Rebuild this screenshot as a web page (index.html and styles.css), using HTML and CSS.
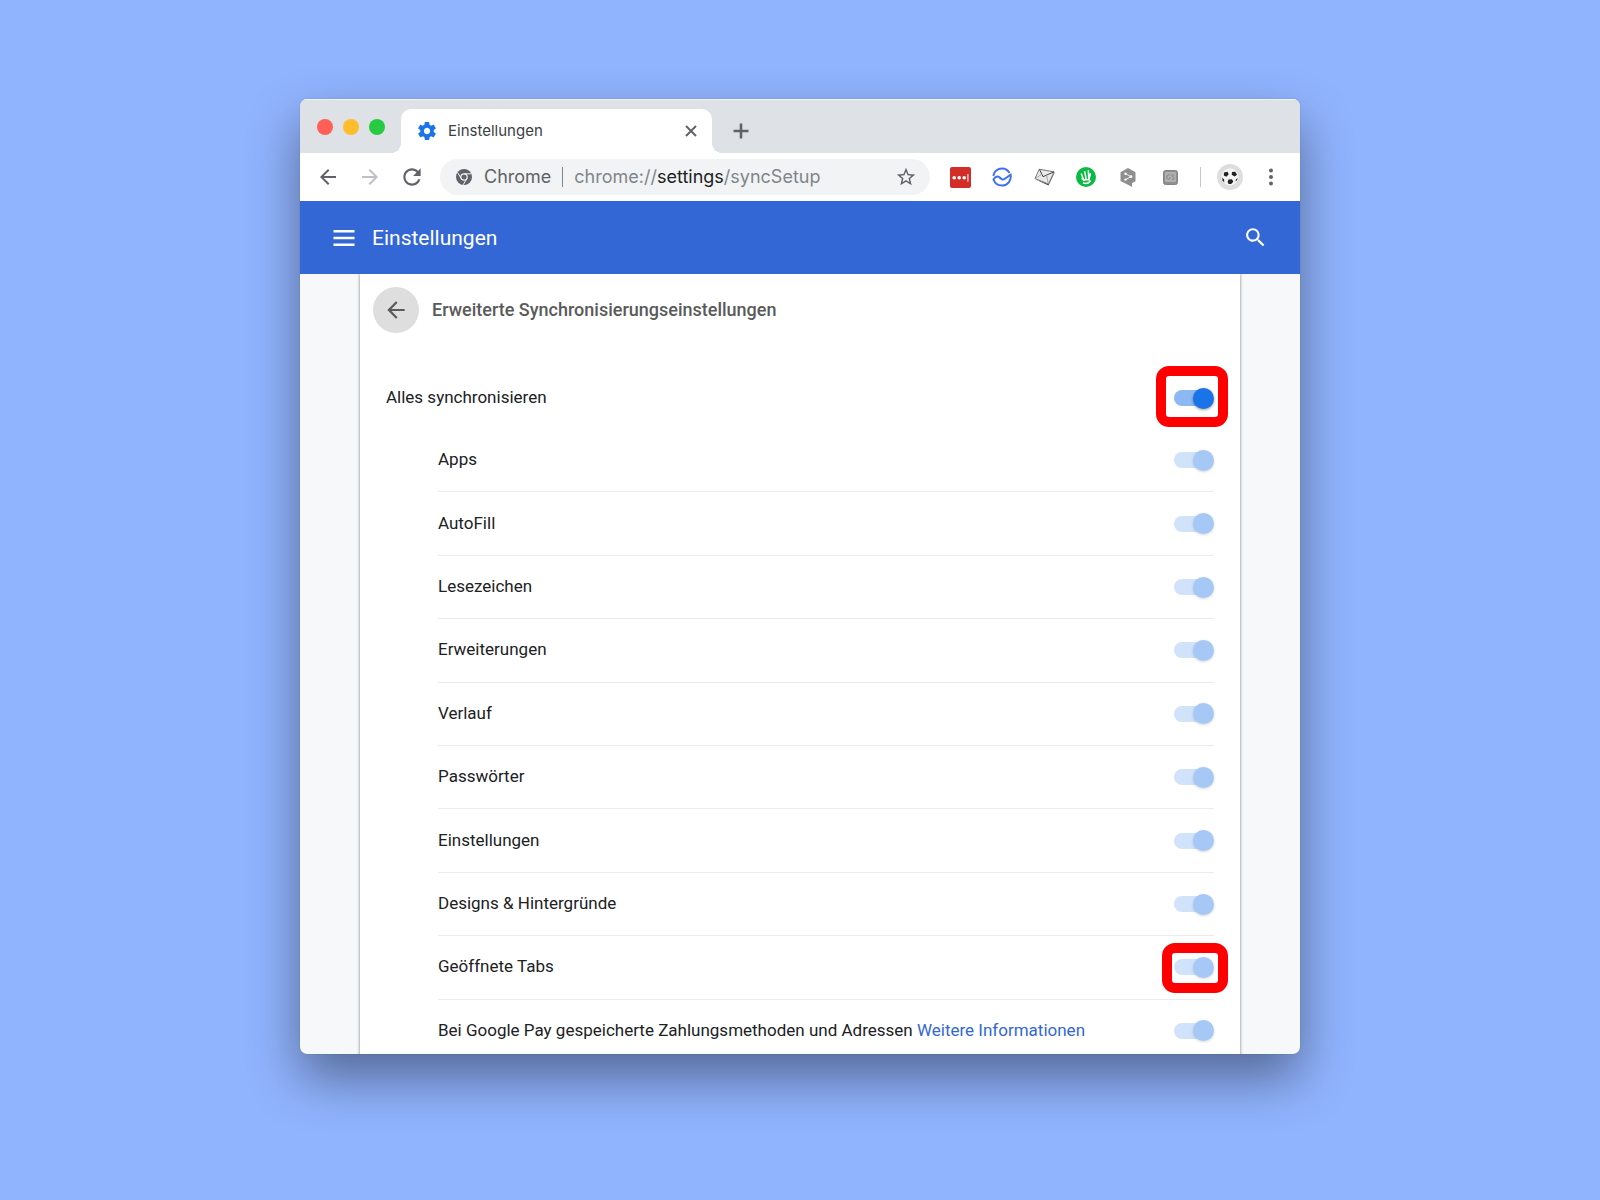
FILE: index.html
```html
<!DOCTYPE html>
<html lang="de">

<head>
    <meta charset="UTF-8">
    <meta name="viewport" content="width=device-width, initial-scale=1.0">
    <title>Einstellungen</title>
    <link rel="stylesheet" href="styles.css">
</head>

<body>

    <div class="window">
        <div class="tab-strip">
            <div class="lights">
                <button class="light red" aria-label="Schließen"></button>
                <button class="light yellow" aria-label="Minimieren"></button>
                <button class="light green" aria-label="Vollbild"></button>
            </div>
            <div class="tab">
                <svg class="tab-icon" viewBox="2 2 20 20" width="18" height="18">
                    <path fill="#1a73e8" d="M19.43 12.98c.04-.32.07-.64.07-.98s-.03-.66-.07-.98l2.11-1.65c.19-.15.24-.42.12-.64l-2-3.46c-.12-.22-.39-.3-.61-.22l-2.49 1c-.52-.4-1.08-.73-1.69-.98l-.38-2.65C14.46 2.18 14.25 2 14 2h-4c-.25 0-.46.18-.49.42l-.38 2.65c-.61.25-1.17.59-1.69.98l-2.49-1c-.23-.09-.49 0-.61.22l-2 3.46c-.13.22-.07.49.12.64l2.11 1.65c-.04.32-.07.65-.07.98s.03.66.07.98l-2.11 1.65c-.19.15-.24.42-.12.64l2 3.46c.12.22.39.3.61.22l2.49-1c.52.4 1.08.73 1.69.98l.38 2.65c.03.24.24.42.49.42h4c.25 0 .46-.18.49-.42l.38-2.65c.61-.25 1.17-.59 1.69-.98l2.49 1c.23.09.49 0 .61-.22l2-3.46c.12-.22.07-.49-.12-.64l-2.11-1.65zM12 15.5c-1.93 0-3.5-1.57-3.5-3.5s1.57-3.5 3.5-3.5 3.5 1.57 3.5 3.5-1.57 3.5-3.5 3.5z" />
                </svg>
                <span class="tab-title">Einstellungen</span>
                <button class="icon-btn small" aria-label="Tab schließen">
                    <svg viewBox="0 0 12 12" width="12" height="12" fill="none" stroke="#5f6368" stroke-width="2">
                        <path d="M1 1l10 10M11 1L1 11" />
                    </svg>
                </button>
            </div>
            <button class="icon-btn new-tab" aria-label="Neuer Tab">
                <svg viewBox="0 0 16 16" width="16" height="16" fill="none" stroke="#5f6368" stroke-width="2.6">
                    <path d="M8 .5v15M.5 8h15" />
                </svg>
            </button>
        </div>

        <div class="toolbar">
            <div class="nav">
                <button class="icon-btn" aria-label="Zurück">
                    <svg viewBox="0 0 24 24" width="24" height="24" fill="#5f6368">
                        <path d="M20 11H7.83l5.59-5.59L12 4l-8 8 8 8 1.41-1.41L7.83 13H20v-2z" />
                    </svg>
                </button>
                <button class="icon-btn" aria-label="Vorwärts">
                    <svg viewBox="0 0 24 24" width="24" height="24" fill="#bdc1c6">
                        <path d="M4 11h12.17l-5.59-5.59L12 4l8 8-8 8-1.41-1.41L16.17 13H4v-2z" />
                    </svg>
                </button>
                <button class="icon-btn" aria-label="Neu laden">
                    <svg viewBox="0 0 24 24" width="26" height="26" fill="#5f6368">
                        <path d="M17.65 6.35C16.2 4.9 14.21 4 12 4c-4.42 0-7.99 3.58-7.99 8s3.57 8 7.99 8c3.73 0 6.84-2.55 7.73-6h-2.08c-.82 2.33-3.04 4-5.65 4-3.31 0-6-2.69-6-6s2.69-6 6-6c1.66 0 3.14.69 4.22 1.78L13 11h7V4l-2.35 2.35z" />
                    </svg>
                </button>
            </div>

            <div class="omnibox">
                <svg viewBox="0 0 16 16" width="16" height="16">
                    <circle cx="8" cy="8" r="8" fill="#5f6368" />
                    <g fill="none" stroke="#f1f3f4">
                        <circle cx="8" cy="8" r="3.2" stroke-width="1.2" />
                        <path d="M8 4.8h7.2M5.2 9.6L1.6 3.4M10.8 9.6L7.2 15.8" />
                    </g>
                </svg>
                <span class="origin">Chrome</span>
                <span class="separator"></span>
                <div class="url" contenteditable="true" role="textbox" aria-label="Adresse" spellcheck="false">chrome://<span class="host">settings</span>/syncSetup</div>
                <button class="icon-btn" aria-label="Lesezeichen hinzufügen">
                    <svg viewBox="0 0 24 24" width="22" height="22" fill="#5f6368">
                        <path d="M22 9.24l-7.19-.62L12 2 9.19 8.63 2 9.24l5.46 4.73L5.82 21 12 17.27 18.18 21l-1.63-7.03L22 9.24zM12 15.4l-3.76 2.27 1-4.28-3.32-2.88 4.38-.38L12 6.1l1.71 4.04 4.38.38-3.32 2.88 1 4.28L12 15.4z" />
                    </svg>
                </button>
            </div>

            <div class="extensions">
                <button class="icon-btn" aria-label="Passwortmanager">
                    <svg viewBox="0 0 21 21" width="21" height="21">
                        <rect width="21" height="21" rx="2" fill="#d32d27" />
                        <circle cx="4.2" cy="10.7" r="1.8" fill="#fff" />
                        <circle cx="9.2" cy="10.7" r="1.8" fill="#fff" />
                        <circle cx="14.2" cy="10.7" r="1.8" fill="#fff" />
                        <rect x="17.4" y="7" width="1" height="7.6" fill="#fff" />
                    </svg>
                </button>
                <button class="icon-btn" aria-label="Synchronisierung">
                    <svg viewBox="0 0 20 20" width="20" height="20" fill="none" stroke="#3e71f4" stroke-width="2">
                        <path d="M1.3 8.8C1.9 4.4 5.6 1.500 10 1.500c3.400 0 6 1.700 7.400 4.400" />
                        <path d="M1.500 12.500c1.800-3 4-3.600 6-2.100l2.200 1.700c1 .7 1.900.6 2.800-.1l6.100-4.300c1 5.800-3 10.800-8.600 10.800-4 0-7.200-2.300-8.500-6z" />
                    </svg>
                </button>
                <button class="icon-btn" aria-label="E-Mail">
                    <svg viewBox="0 0 21 18" width="21" height="18">
                        <path fill="#444" d="M.5 11l14 6.500L21 4l-1 1-5.500 11z" />
                        <path fill="#e9e9e9" stroke="#777" d="M5.300 1.200L20 3.800l-5.500 12.300L1 10.500z" />
                        <path fill="none" stroke="#444" d="M5.500 1.400l3.500 7.300L20 3.800" />
                        <path fill="none" stroke="#aaa" d="M1.500 10.400l5.800-3.900M14.300 15.500l-1.700-8" />
                    </svg>
                </button>
                <button class="icon-btn" aria-label="Notizen">
                    <svg viewBox="0 0 20 20" width="20" height="20" fill="none" stroke="#fff" stroke-width="1.5">
                        <circle cx="10" cy="10" r="10" fill="#09bb43" stroke="none" />
                        <path d="M5.200 6.500l2.400 6.300M8.600 4.200l1.700 8.300M12.300 3.200l.6 9.300M5.800 11l2 2.300 2.500-.8 2.600.2 1.600-6.500M7 15.700c2.800 1.200 5.800.7 7.500-2.200" />
                    </svg>
                </button>
                <button class="icon-btn" aria-label="Übersetzer">
                    <svg viewBox="0 0 16 19" width="16" height="19">
                        <path fill="#8e8e8e" d="M8 0l7.500 4.200v9L12 15.300V19l-4.500-2.500L.5 13V4.200z" />
                        <path fill="none" stroke="#eee" d="M5.500 5.700l5.500 3-5.500 2.900" />
                        <g fill="#fff">
                            <circle cx="5.500" cy="5.700" r="1.200" />
                            <circle cx="11" cy="8.700" r="1.400" />
                            <circle cx="5.500" cy="11.600" r="1.200" />
                        </g>
                    </svg>
                </button>
                <button class="icon-btn" aria-label="Verlaufssuche">
                    <svg viewBox="0 0 15 15" width="15" height="15" fill="none">
                        <rect x=".5" y=".5" width="14" height="14" rx="2" fill="#8f8f8f" stroke="#858585" />
                        <rect x="2" y="2" width="11" height="10" rx="1" fill="#b0b0b0" />
                        <path stroke="#858585" d="M6.800 5.200c-1.500-1-3-.2-3 1.800s1.500 2.900 3 1.900V7.300M11.300 5.300c-1-.7-2.600-.5-2.600.5 0 1.500 2.700.8 2.700 2.400 0 1.200-1.700 1.400-2.800.6" />
                    </svg>
                </button>
            </div>
            <span class="toolbar-line"></span>
            <button class="avatar" aria-label="Profil">
                <svg viewBox="0 0 26 26" width="26" height="26">
                    <circle cx="13" cy="13" r="13" fill="#dedede" />
                    <circle cx="13" cy="13" r="8.5" fill="#f4f4f4" />
                    <g fill="#222">
                        <path d="M7 8.500l3.500-.8 1.200 2.600-2.300 2.500-2.600-1.200z" />
                        <path d="M15 8l3.200-.3 1.800 3-2.300 1.700-3-1.700z" />
                        <path d="M11.500 15.500l3.500-.3 1.300 2.600-2.200 2.200h-2.500l-1-2z" />
                        <path d="M5.200 13.500l1.800 2 .3 3-1.800-2z" />
                        <path d="M20.500 14l-1.500 1.500-.5 2 1.700-1.400z" />
                    </g>
                </svg>
            </button>
            <button class="icon-btn" aria-label="Menü">
                <svg viewBox="0 0 4 18" width="4" height="18" fill="#5f6368">
                    <circle cx="2" cy="2.500" r="2" />
                    <circle cx="2" cy="9" r="2" />
                    <circle cx="2" cy="15.500" r="2" />
                </svg>
            </button>
        </div>

        <header class="app-bar">
            <button class="icon-btn" aria-label="Hauptmenü">
                <svg viewBox="0 0 22 16" width="22" height="16" fill="#fff">
                    <path d="M.5 0h21v2.400H.5zM.5 6.800h21v2.400H.5zM.5 13.600h21V16H.5z" />
                </svg>
            </button>
            <h1>Einstellungen</h1>
            <button class="icon-btn" aria-label="In Einstellungen suchen">
                <svg viewBox="0 0 24 24" width="25" height="25" fill="#fff">
                    <path d="M15.5 14h-.79l-.28-.27C15.41 12.59 16 11.11 16 9.5 16 5.91 13.09 3 9.5 3S3 5.91 3 9.5 5.91 16 9.5 16c1.61 0 3.09-.59 4.23-1.57l.27.28v.79l5 4.99L20.49 19l-4.99-5zm-6 0C7.01 14 5 11.99 5 9.5S7.01 5 9.5 5 14 7.01 14 9.5 11.99 14 9.5 14z" />
                </svg>
            </button>
        </header>

        <main class="content">
            <div class="card">
                <div class="card-head">
                    <button class="back" aria-label="Zurück">
                        <svg viewBox="0 0 24 24" width="26" height="26" fill="#5a5a5a">
                            <path d="M20 11H7.83l5.59-5.59L12 4l-8 8 8 8 1.41-1.41L7.83 13H20v-2z" />
                        </svg>
                    </button>
                    <h2>Erweiterte Synchronisierungseinstellungen</h2>
                </div>

                <div class="row all">
                    <label for="all">Alles synchronisieren</label>
                    <span class="switch marked"><input type="checkbox" id="all" checked></span>
                </div>

                <div class="list">
                    <div class="row">
                        <label for="apps">Apps</label>
                        <span class="switch"><input type="checkbox" id="apps" checked disabled></span>
                    </div>
                    <div class="row">
                        <label for="autofill">AutoFill</label>
                        <span class="switch"><input type="checkbox" id="autofill" checked disabled></span>
                    </div>
                    <div class="row">
                        <label for="bookmarks">Lesezeichen</label>
                        <span class="switch"><input type="checkbox" id="bookmarks" checked disabled></span>
                    </div>
                    <div class="row">
                        <label for="extensions">Erweiterungen</label>
                        <span class="switch"><input type="checkbox" id="extensions" checked disabled></span>
                    </div>
                    <div class="row">
                        <label for="history">Verlauf</label>
                        <span class="switch"><input type="checkbox" id="history" checked disabled></span>
                    </div>
                    <div class="row">
                        <label for="passwords">Passwörter</label>
                        <span class="switch"><input type="checkbox" id="passwords" checked disabled></span>
                    </div>
                    <div class="row">
                        <label for="settings">Einstellungen</label>
                        <span class="switch"><input type="checkbox" id="settings" checked disabled></span>
                    </div>
                    <div class="row">
                        <label for="themes">Designs &amp; Hintergründe</label>
                        <span class="switch"><input type="checkbox" id="themes" checked disabled></span>
                    </div>
                    <div class="row">
                        <label for="tabs">Geöffnete Tabs</label>
                        <span class="switch marked compact"><input type="checkbox" id="tabs" checked disabled></span>
                    </div>
                    <div class="row">
                        <div class="text">
                            <label for="pay">Bei Google Pay gespeicherte Zahlungsmethoden und Adressen</label>
                            <a href="#">Weitere Informationen</a>
                        </div>
                        <span class="switch"><input type="checkbox" id="pay" checked disabled></span>
                    </div>
                </div>
            </div>
        </main>
    </div>

</body>

</html>
```
FILE: styles.css
```css
* {
    box-sizing: border-box;
}

body {
    display: flex;
    height: 100vh;
    margin: 0;
    padding: 99px 24px 146px;
    background-color: #91b4ff;
    font-family: Roboto, "Liberation Sans", sans-serif;
    font-size: 17px;
    line-height: 24px;
    color: #202124;
}

button {
    padding: 0;
    border: 0;
    background: none;
    cursor: pointer;
}

svg {
    display: block;
    flex: none;
}

h1,
h2 {
    margin: 0;
}

.window {
    display: flex;
    flex-direction: column;
    width: 100%;
    max-width: 1000px;
    margin: 0 auto;
    border-radius: 7px;
    overflow: hidden;
    background-color: #f7f8fa;
    box-shadow: 0 0 1px rgba(0, 0, 0, 0.4), 0 24px 52px rgba(0, 0, 0, 0.42);
}

.icon-btn {
    display: flex;
    flex: none;
    align-items: center;
    justify-content: center;
    width: 32px;
    height: 32px;
}

.icon-btn.small {
    width: 20px;
    height: 20px;
}

/* Tabs */
.tab-strip {
    display: flex;
    flex: none;
    align-items: center;
    height: 54px;
    padding: 2px 0 0 17px;
    background-color: #dee1e6;
    box-shadow: inset 0 1px #f0f1f3;
}

.lights {
    display: flex;
    gap: 10px;
    margin-right: 16px;
}

.light {
    width: 16px;
    height: 16px;
    border-radius: 50%;
}

.red {
    background-color: #ff5f57;
}

.yellow {
    background-color: #ffbd2e;
}

.green {
    background-color: #28ca41;
}

.tab {
    position: relative;
    display: flex;
    align-items: center;
    align-self: flex-end;
    gap: 12px;
    width: 311px;
    height: 44px;
    margin-right: 13px;
    padding: 0 11px 0 17px;
    border-radius: 10px 10px 0 0;
    background-color: #fff;
}

/* rounded feet of the active tab */
.tab::before,
.tab::after {
    content: "";
    position: absolute;
    bottom: 0;
    width: 10px;
    height: 10px;
}

.tab::before {
    right: 100%;
    background: radial-gradient(circle at 0 0, transparent 10px, #fff 10px);
}

.tab::after {
    left: 100%;
    background: radial-gradient(circle at 100% 0, transparent 10px, #fff 10px);
}

.tab-title {
    flex: 1;
    font-family: Inter, sans-serif;
    font-size: 15px;
    color: #3c4043;
}

.new-tab {
    align-self: flex-end;
    height: 44px;
}

/* Toolbar */
.toolbar {
    display: flex;
    flex: none;
    align-items: center;
    height: 48px;
    padding: 0 13px 0 12px;
    background-color: #fff;
}

.nav,
.extensions {
    display: flex;
    gap: 10px;
}

.omnibox {
    display: flex;
    flex: 1;
    align-items: center;
    height: 36px;
    margin: 0 14px 0 12px;
    padding: 0 8px 0 16px;
    border-radius: 18px;
    background-color: #f1f3f4;
    font-family: Inter, sans-serif;
    font-size: 18px;
    color: #5f6368;
}

.origin {
    margin-left: 12px;
}

.separator {
    width: 1px;
    height: 20px;
    margin: 0 11px;
    background-color: #80868b;
}

.url {
    flex: 1;
    color: #80868b;
    white-space: nowrap;
    outline: none;
}

.host {
    color: #202124;
}

.toolbar-line {
    width: 1px;
    height: 20px;
    margin: 0 16px 0 14px;
    background-color: #c4c7cb;
}

.avatar {
    margin-right: 12px;
}

/* Blue bar */
.app-bar {
    display: flex;
    flex: none;
    align-items: center;
    gap: 12px;
    height: 73px;
    padding: 0 29px 0 28px;
    background-color: #3367d6;
}

.app-bar h1 {
    flex: 1;
    font-size: 21px;
    font-weight: 400;
    color: #fff;
}

/* Settings */
.content {
    display: flex;
    flex: 1;
    min-height: 0;
    padding: 0 6%;
    overflow: hidden;
}

.card {
    display: flex;
    flex: 1;
    flex-direction: column;
    margin-bottom: -8px;
    background-color: #fff;
    box-shadow: 0 0 3px rgba(0, 0, 0, 0.5);
}

.card-head {
    display: flex;
    flex: none;
    align-items: center;
    gap: 13px;
    height: 72px;
    padding: 0 13px;
}

.back {
    display: flex;
    align-items: center;
    justify-content: center;
    width: 46px;
    height: 46px;
    border-radius: 50%;
    background-color: #dedede;
}

.card-head h2 {
    font-size: 18px;
    font-weight: 500;
    color: #5a5a5a;
}

.list {
    display: flex;
    flex: 1;
    flex-direction: column;
    padding: 0 26px 0 78px;
}

.row {
    display: flex;
    flex: 1;
    align-items: center;
    justify-content: space-between;
    min-height: 60px;
}

.row + .row {
    border-top: 1px solid #ebebeb;
}

.row.all {
    flex: none;
    height: 62px;
    margin: 21px 26px 0;
}

.row > label,
.row > .text {
    padding-bottom: 2px;
}

.row a {
    color: #3367d6;
    text-decoration: none;
}

.switch {
    position: relative;
    display: flex;
}

.switch input {
    display: flex;
    align-items: center;
    width: 40px;
    height: 21px;
    margin: 0;
    appearance: none;
}

/* bar behind the knob */
.switch input::before {
    content: "";
    flex: 1;
    height: 16px;
    margin-right: -12px;
    border-radius: 8px;
    background-color: #8cb9f4;
}

.switch input::after {
    content: "";
    z-index: 1;
    width: 21px;
    height: 21px;
    border-radius: 50%;
    background-color: #1a73e8;
    box-shadow: 0 1px 3px rgba(0, 0, 0, 0.4);
}

.switch input:not(:checked) {
    transform: scaleX(-1);
    filter: grayscale(1);
}

.switch input:disabled::before {
    background-color: #d1e3fa;
}

.switch input:disabled::after {
    background-color: #a6c8f6;
    box-shadow: 0 1px 3px rgba(0, 0, 0, 0.16);
}

/* red frame around a switch */
.marked::after {
    content: "";
    position: absolute;
    inset: -22px -14px -18px -18px;
    border: 10px solid #f00;
    border-radius: 13px;
    pointer-events: none;
}

.marked.compact::after {
    inset: -14px -14px -15px -12px;
}
```
